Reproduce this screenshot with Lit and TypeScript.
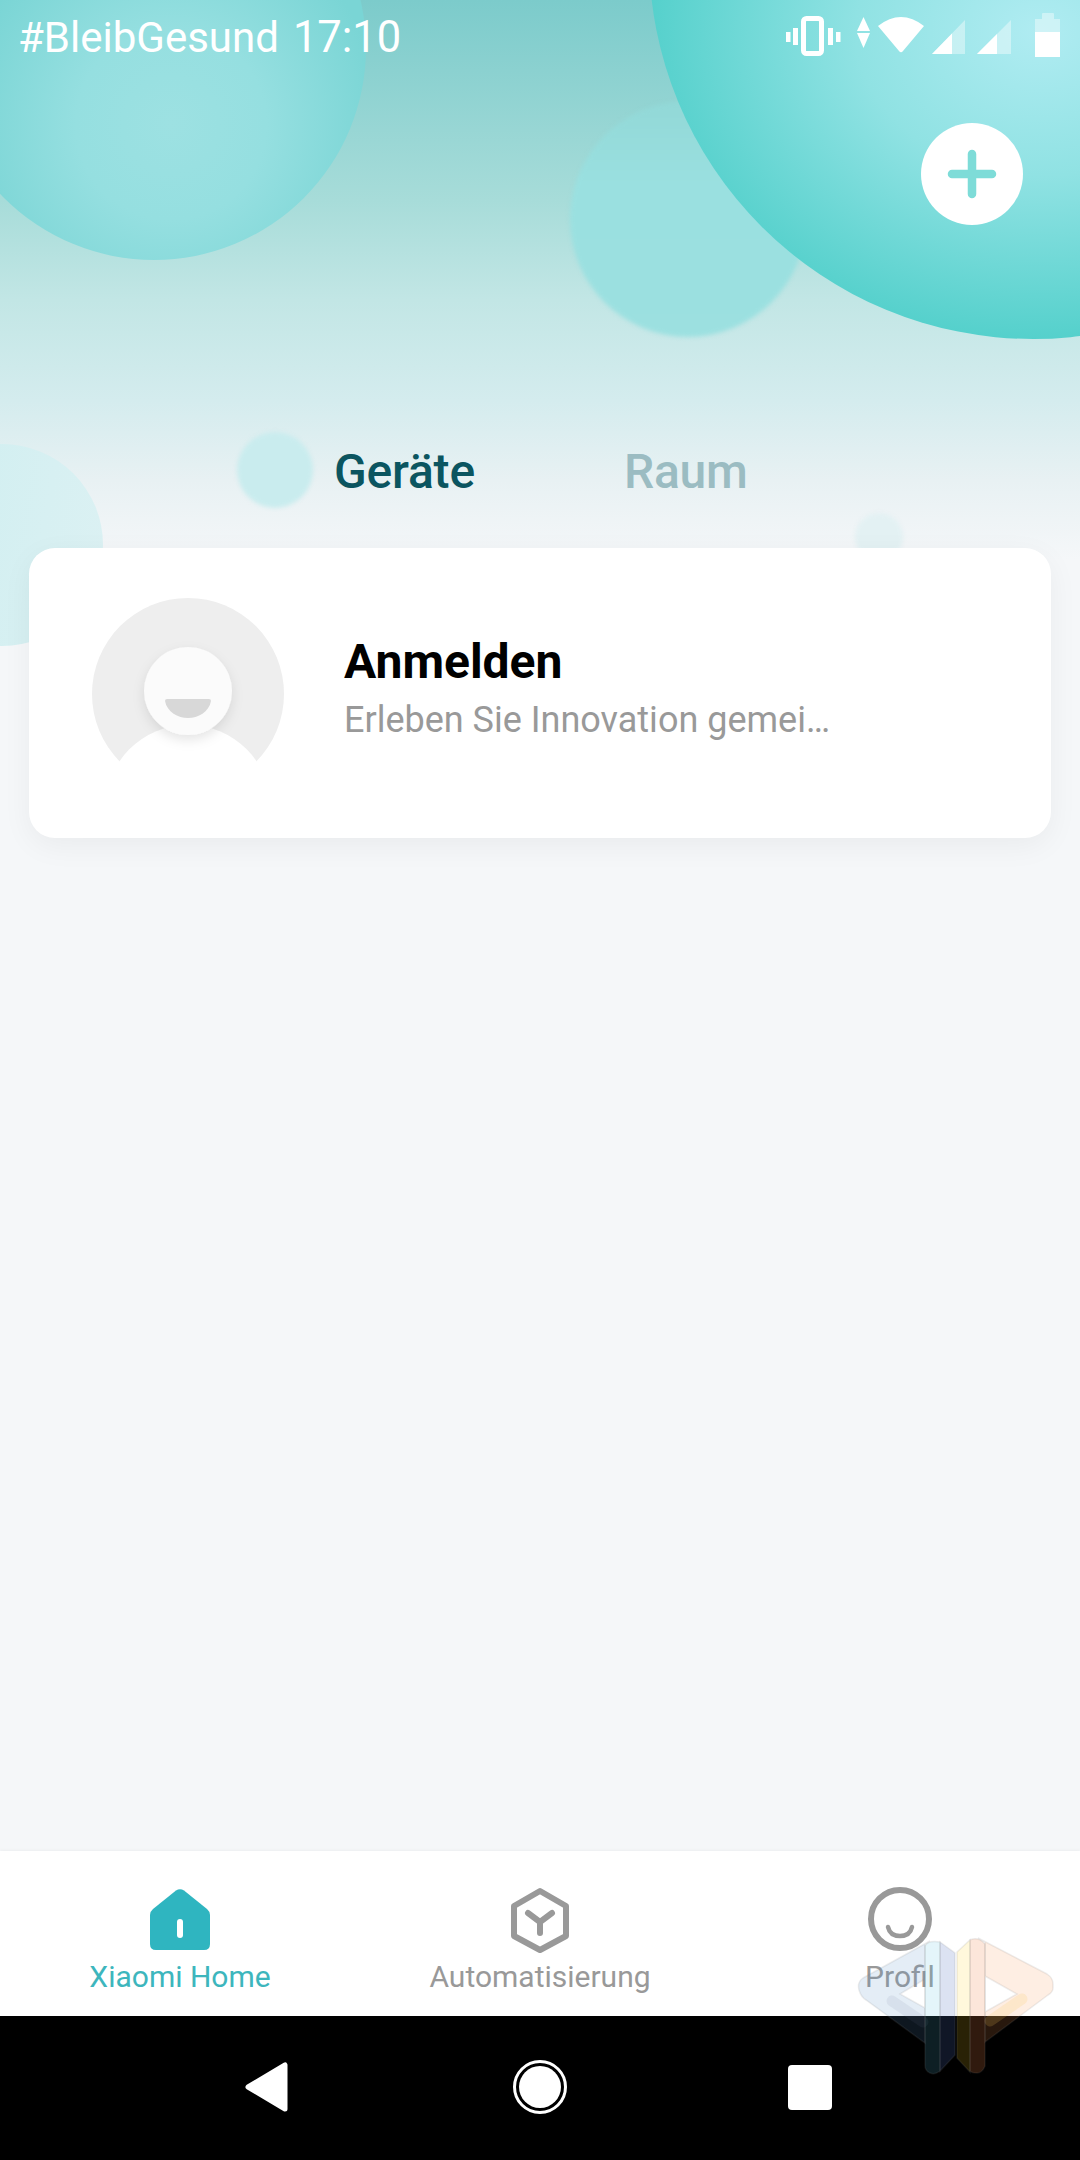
import { LitElement, html, css } from "lit";
import { customElement } from "lit/decorators.js";

@customElement("app-root")
export class AppRoot extends LitElement {
  static styles = css`
    :host { display: block; width: 1080px; height: 2160px; font-family: Roboto, "Liberation Sans", sans-serif; }
    * { box-sizing: border-box; }
    .screen {
      position: relative; width: 1080px; height: 2160px; overflow: hidden;
      display: flex; flex-direction: column;
      background: linear-gradient(#7ccbcb 0, #a7dcd9 200px, #c2e6e5 300px, #d4ecee 400px, #e8f1f3 480px, #f5f7f9 560px);
    }
    .bubbles { position: absolute; inset: 0; overflow: hidden; }
    .bubble { position: absolute; border-radius: 50%; }
    .b-left { left: -58px; top: -164px; width: 424px; height: 424px;
      background: radial-gradient(circle 212px at 54% 68%, #9de1e2 0, #95dfe0 45%, #7ad5d5 100%); }
    .b-mid { left: 570px; top: 101px; width: 236px; height: 236px; background: linear-gradient(#92d8d7 0, #9ae0e0 35%, #9ce0e0 100%); filter: blur(2px); }
    .b-right { left: 649px; top: -429px; width: 768px; height: 768px;
      background: radial-gradient(ellipse 410px 320px at 51% 60%, #b0ecf2 0, #90e2e3 45%, #50cfca 100%); }
    .b-small { left: 237px; top: 432px; width: 76px; height: 76px; background: #c9ecee; filter: blur(2px); }
    .b-side { left: -99px; top: 444px; width: 202px; height: 202px; background: linear-gradient(100deg, #cdeef0, #dcf1f3); }
    .b-faint { left: 855px; top: 513px; width: 48px; height: 48px; background: #e3f1f3; filter: blur(2px); }

    .status { position: relative; height: 76px; display: flex; justify-content: space-between; align-items: center; padding: 0 10px 0 18px; color: #fff; font-size: 42px; line-height: 50px; }
    .status .left { display: flex; gap: 14px; align-items: baseline; }
    .status .time { font-size: 43.5px; }
    .status svg { display: block; }

    .add-row { position: relative; display: flex; justify-content: flex-end; padding-right: 57px; margin-top: 47px; }
    .add { width: 102px; height: 102px; border-radius: 50%; background: #fff; display: flex; align-items: center; justify-content: center; }

    .tabs { position: relative; display: flex; gap: 149px; margin-top: 217px; padding-left: 334px; font-size: 48px; line-height: 60px; font-weight: 500; letter-spacing: -0.2px; }
    .tab-on { color: #0b5560; }
    .tab-off { color: #9bbcc2; }

    .card { position: relative; margin: 46px 29px 0; height: 290px; background: #fff; border-radius: 26px; box-shadow: 0 8px 30px rgba(0,0,0,.05); display: flex; padding: 50px 0 0 63px; gap: 60px; }
    .avatar { display: block; flex: none; }
    .card-text { padding-top: 37px; }
    .card-title { font-size: 48px; line-height: 54px; font-weight: 700; color: #000; }
    .card-sub { margin-top: 11px; font-size: 36px; line-height: 40px; color: #999; }

    .spacer { flex: 1; position: relative; }

    .nav { position: relative; height: 165px; background: #fff; box-shadow: 0 -1px 3px rgba(0,0,0,.04); display: grid; grid-template-columns: repeat(3, 360px); padding-top: 34px; }
    .nav-item { display: flex; flex-direction: column; align-items: center; gap: 4px; font-size: 30px; line-height: 36px; color: #999; }
    .nav-item.on { color: #3db6bd; }
    .nav-item svg { display: block; }

    .sys { position: relative; height: 144px; background: #000; display: grid; grid-template-columns: repeat(3, 270px); justify-content: center; align-items: center; justify-items: center; }
    .sys svg { display: block; }

    .mark { position: absolute; left: 850px; top: 1930px; }
  `;

  render() {
    return html`
      <div class="screen">
        <div class="bubbles">
          <div class="bubble b-left"></div>
          <div class="bubble b-mid"></div>
          <div class="bubble b-right"></div>
          <div class="bubble b-small"></div>
          <div class="bubble b-side"></div>
          <div class="bubble b-faint"></div>
        </div>

        <div class="status">
          <div class="left"><span>#BleibGesund</span><span class="time">17:10</span></div>
          <svg width="285" height="76" viewBox="785 0 285 76" fill="#fff">
            <rect x="803.5" y="18.5" width="18" height="35" rx="3" fill="none" stroke="#fff" stroke-width="5"></rect>
            <rect x="786" y="32" width="4.5" height="10"></rect>
            <rect x="793" y="28" width="5" height="17"></rect>
            <rect x="828" y="28" width="5" height="17"></rect>
            <rect x="836" y="32" width="4.5" height="10"></rect>
            <path d="M863.5 17 L870 31 H857Z"></path>
            <path d="M857 33 H870 L863.5 48Z"></path>
            <path d="M878 26 Q901 8 924 26 L903 51 Q901 53.5 899 51 Z"></path>
            <path d="M932 54 L965 20 V54Z" opacity=".4"></path>
            <path d="M932 54 L952 33.4 V54Z"></path>
            <path d="M977 54 L1011 20 V54Z" opacity=".4"></path>
            <path d="M977 54 L997 34 V54Z"></path>
            <path d="M1042 14 Q1042 13 1043 13 H1053 Q1054 13 1054 14 V19 H1060 V32 H1035 V19 H1042Z" opacity=".4"></path>
            <rect x="1035" y="32" width="25" height="25"></rect>
          </svg>
        </div>

        <div class="add-row">
          <div class="add">
            <svg width="56" height="56" viewBox="0 0 56 56">
              <path d="M28 8 V48 M8 28 H48" stroke="#7edcd8" stroke-width="8.5" stroke-linecap="round" fill="none"></path>
            </svg>
          </div>
        </div>

        <div class="tabs"><span class="tab-on">Geräte</span><span class="tab-off">Raum</span></div>

        <div class="card">
          <svg class="avatar" width="192" height="192" viewBox="0 0 192 192">
            <defs>
              <filter id="hs" x="-30%" y="-30%" width="160%" height="170%">
                <feDropShadow dx="0" dy="5" stdDeviation="6" flood-color="#000" flood-opacity=".1"></feDropShadow>
              </filter>
            </defs>
            <circle cx="96" cy="96" r="96" fill="#eeeeee"></circle>
            <circle cx="96" cy="210" r="83" fill="#fff"></circle>
            <circle cx="96" cy="93" r="44" fill="#fbfbfb" filter="url(#hs)"></circle>
            <path d="M73 103 Q73 101 75 101 H117 Q119 101 119 103 C117 114 106 120 96 120 C86 120 75 114 73 103Z" fill="#d8d8d8"></path>
          </svg>
          <div class="card-text">
            <div class="card-title">Anmelden</div>
            <div class="card-sub">Erleben Sie Innovation gemei…</div>
          </div>
        </div>

        <div class="spacer"></div>

        <div class="nav">
          <div class="nav-item on">
            <svg width="70" height="70" viewBox="0 0 70 70">
              <path d="M31 5.5 Q35 3 39 5.5 L62 24 Q65 26.5 65 30 V59 Q65 65 59 65 H11 Q5 65 5 59 V30 Q5 26.5 8 24 Z" fill="#2fb5c0"></path>
              <rect x="32" y="34" width="6" height="19" rx="3" fill="#fff"></rect>
            </svg>
            <span>Xiaomi Home</span>
          </div>
          <div class="nav-item">
            <svg width="70" height="70" viewBox="0 0 70 70" fill="none" stroke="#999" stroke-width="6" stroke-linecap="round" stroke-linejoin="round">
              <path d="M35 6 L61 21 V51 L35 65 L9 51 V21 Z"></path>
              <path d="M23 28 L35 37 L47 28 M35 37 V48"></path>
            </svg>
            <span>Automatisierung</span>
          </div>
          <div class="nav-item">
            <svg width="70" height="70" viewBox="0 0 70 70" fill="none" stroke="#999">
              <circle cx="35" cy="34" r="29" stroke-width="6"></circle>
              <path d="M23 42 Q25 51 35 51 Q45 51 47 42" stroke-width="4.5" stroke-linecap="round"></path>
            </svg>
            <span>Profil</span>
          </div>
        </div>

        <div class="sys">
          <svg width="60" height="60" viewBox="0 0 60 60"><path d="M8 29 L45 7 V51 Z" fill="#fff" stroke="#fff" stroke-width="5" stroke-linejoin="round"></path></svg>
          <svg width="60" height="60" viewBox="0 0 60 60"><circle cx="30" cy="29" r="25.5" fill="none" stroke="#fff" stroke-width="3"></circle><circle cx="30" cy="29" r="21" fill="#fff"></circle></svg>
          <svg width="60" height="60" viewBox="0 0 60 60"><rect x="8" y="7" width="44" height="45" rx="4" fill="#fff"></rect></svg>
        </div>

        <svg class="mark" width="220" height="160" viewBox="0 0 220 160" stroke="rgba(130,130,130,.14)" stroke-width="1.5">
          <path fill-rule="evenodd" d="M80 11 L13 48 Q7 52 9 60 Q11 67 16 70 L75 113 V14 Z M50 64 L75 49 V78 Z" fill="rgba(85,140,200,.16)"></path>
          <path d="M42 71 L73 92" fill="none" stroke="rgba(110,120,150,.1)" stroke-width="11" stroke-linecap="round"></path>
          <path d="M75 16 Q78 10 90 12 V141 Q85 145 80 143 Q75 141 75 135 Z" fill="rgba(90,190,225,.16)"></path>
          <path d="M90 12 L105 23 V125 L90 141 Z" fill="rgba(80,110,190,.2)"></path>
          <path fill-rule="evenodd" d="M128 8 L197 44 Q203 48 203 54 V58 Q203 62 198 65 L135 112 V12 Z M135 46 L167 64 L135 82 Z" fill="rgba(250,150,80,.16)"></path>
          <path d="M140 91 L172 69" fill="none" stroke="rgba(250,200,90,.18)" stroke-width="11" stroke-linecap="round"></path>
          <path d="M107 22 L120 10 V142 L107 128 Z" fill="rgba(255,210,40,.16)"></path>
          <path d="M120 10 Q128 6 135 14 V136 Q132 143 127 143 Q122 143 120 141 Z" fill="rgba(240,130,70,.2)"></path>
        </svg>
      </div>
    `;
  }
}
